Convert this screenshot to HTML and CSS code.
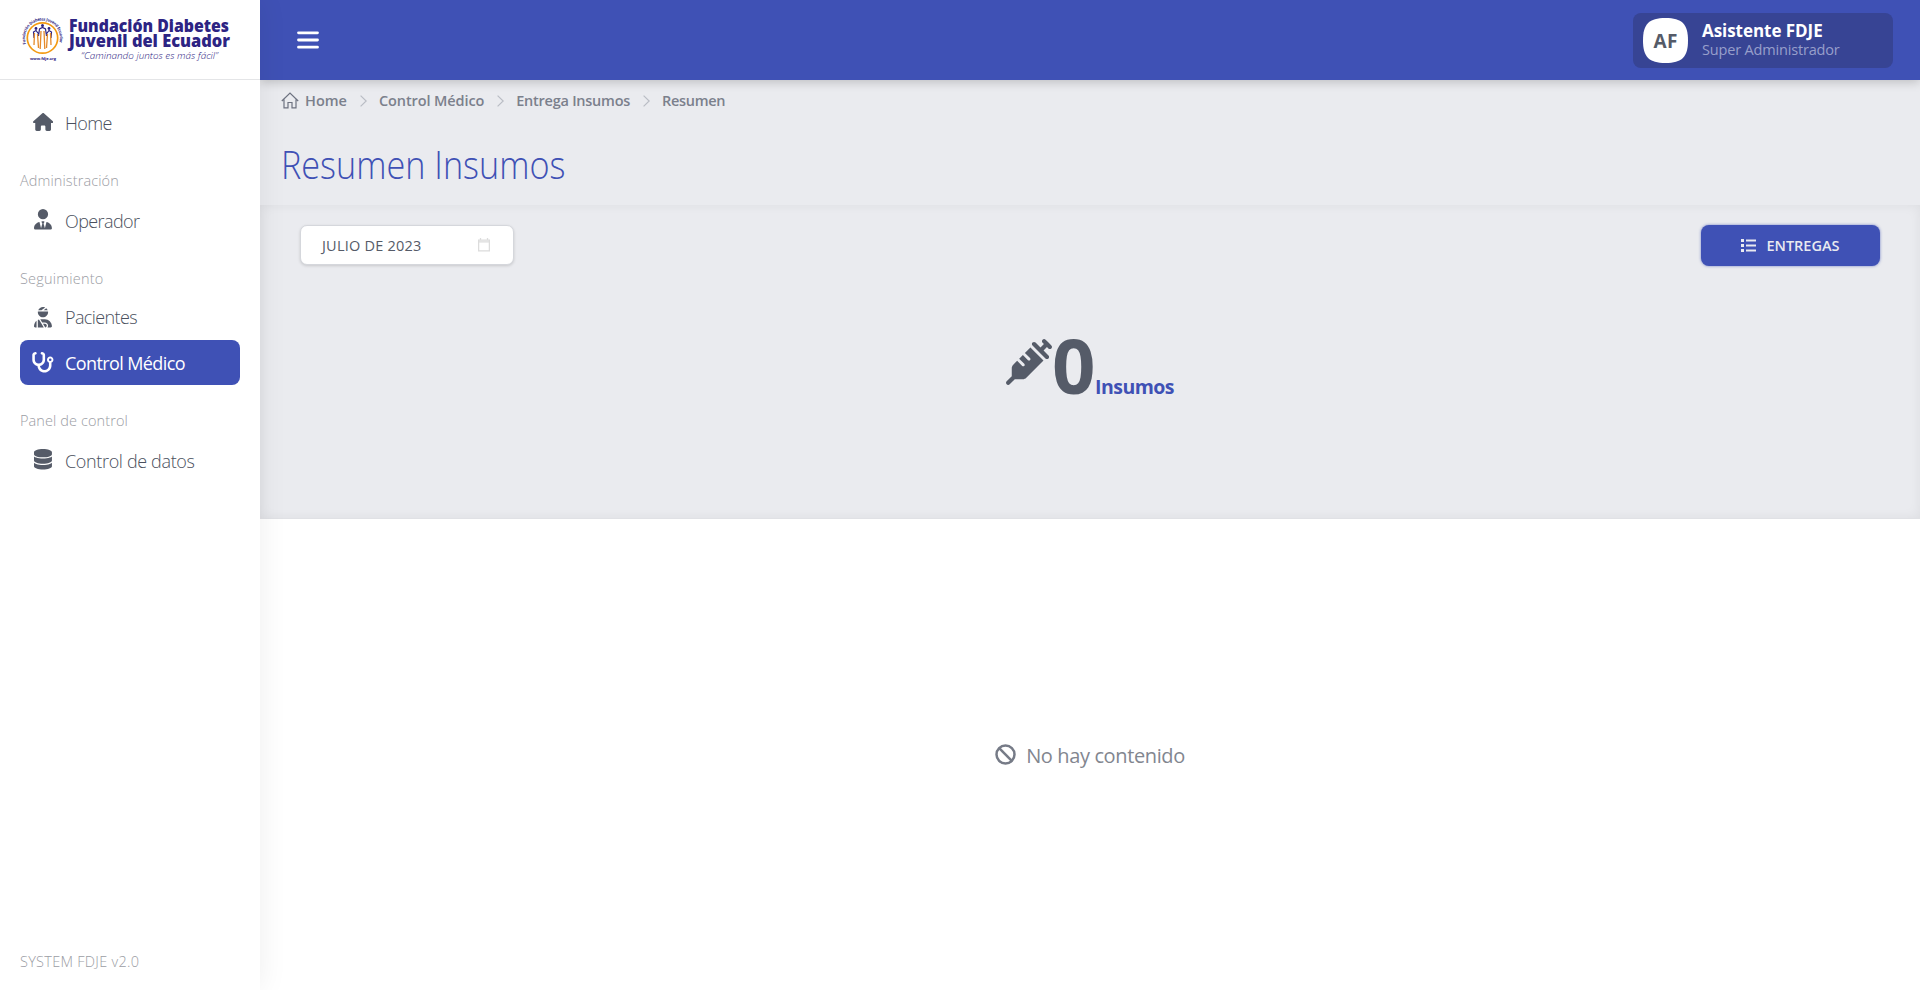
FILE: index.html
```html
<!DOCTYPE html>
<html lang="es">
<head>
<meta charset="utf-8">
<title>Resumen Insumos</title>
<link rel="stylesheet" href="styles.css">
</head>
<body>
<aside class="sidebar">
  <div class="brand">
    <svg width="220" height="60" viewBox="0 0 220 60">
      <defs><path id="ring" d="M6 43.800 A17.500 17.500 0 1 1 39 43.800"/></defs>
      <circle cx="22.500" cy="38" r="15.200" fill="none" stroke="#f39a12" stroke-width="1.700"/>
      <text class="ring-text" textLength="65"><textPath href="#ring">Fundación Diabetes Juvenil Ecuador</textPath></text>
      <g fill="none" stroke="#2d2483" stroke-width="1.200">
        <path d="M14 38l-.5-6 2.500-1.500 3 4M18.500 36l1-7 3-1.500 3 1.500 1 7M26 34.500l3-4 2.500 1.500-.5 6"/>
      </g>
      <g fill="#2d2483"><circle cx="16" cy="28.500" r="1.400"/><circle cx="22.500" cy="25.500" r="1.500"/><circle cx="29" cy="28.500" r="1.400"/></g>
      <g fill="none" stroke="#e58a2a" stroke-width="1.300"><path d="M14.500 33l-.5 12M17.500 34l1 14M21 31l-.8 18M24 31l.8 18M27.500 34l-1 14M30.500 33l.5 12"/></g>
      <text class="site" x="10" y="59.500" textLength="26">www.fdje.org</text>
      <text class="name" x="49" y="31.500" textLength="160" lengthAdjust="spacingAndGlyphs">Fundación Diabetes</text>
      <text class="name" x="49" y="47" textLength="161" lengthAdjust="spacingAndGlyphs">Juvenil del Ecuador</text>
      <text class="motto" x="61" y="58.500" textLength="137" lengthAdjust="spacingAndGlyphs">“Caminando juntos es más fácil”</text>
    </svg>
  </div>
  <nav class="nav">
    <a class="item home"><span class="ico"><svg height="18" viewBox="0 0 576 512"><path d="M575.8 255.5c0 18-15 32.1-32 32.1h-32l.7 160.2c0 2.700-.2 5.400-.5 8.100V472c0 22.100-17.900 40-40 40H392c-22.100 0-40-17.900-40-40V384c0-17.700-14.300-32-32-32H256c-17.700 0-32 14.300-32 32v88c0 22.100-17.900 40-40 40H104c-22.100 0-40-17.900-40-40V287.6H32c-18 0-32-14-32-32.1c0-9 3-17 10-24L266.4 8c7-7 15-8 22-8s15 2 21 7L564.8 231.5c8 7 12 15 11 24z"/></svg></span><span class="label">Home</span></a>
    <h6 class="group g1">Administración</h6>
    <a class="item"><span class="ico up"><svg height="20.500" viewBox="0 0 448 512"><path d="M224 256A128 128 0 1 0 224 0a128 128 0 1 0 0 256zM209.1 359.2l-18.600-31c-6.400-10.700 1.300-24.200 13.700-24.200h39.500c12.400 0 20.100 13.600 13.700 24.200l-18.600 31 33.400 123.900 39.500-161.200c77.200 12 136.300 78.800 136.300 159.400c0 17-13.800 30.700-30.700 30.700H30.700C13.800 512 0 498.2 0 481.3c0-80.600 59.100-147.400 136.3-159.4l39.500 161.2 33.400-123.9z"/></svg></span><span class="label">Operador</span></a>
    <h6 class="group g2">Seguimiento</h6>
    <a class="item pac"><span class="ico"><svg height="20.500" viewBox="0 0 448 512"><path d="M240 80H342.7c-7.900-19.500-20.400-36.500-36.200-49.900L240 80zm37.700-68.200C261.3 4.200 243.2 0 224 0c-53.700 0-99.700 33.100-118.700 80h81.400l91-68.200zM224 256c70.700 0 128-57.300 128-128c0-5.400-.3-10.800-1-16H97c-.7 5.200-1 10.600-1 16c0 70.700 57.300 128 128 128zM124 312.4c-9.700 3.100-19.100 7-28 11.700V512H243.7L181.5 408.2 124 312.4zm33-7.200L204.3 384H272c44.200 0 80 35.800 80 80c0 18-6 34.600-16 48h82.300c16.400 0 29.700-13.300 29.700-29.700C448 383.8 368.2 304 269.7 304H178.3c-7.200 0-14.300 .4-21.300 1.300zM0 482.3C0 498.7 13.300 512 29.700 512H64V345.4C24.900 378.1 0 427.3 0 482.3zM320 464c0-26.500-21.500-48-48-48H223.5l57.100 95.2C303 507.2 320 487.6 320 464z"/></svg></span><span class="label">Pacientes</span></a>
    <a class="item active"><span class="ico"><svg height="20.500" viewBox="0 0 576 512"><path d="M142.4 21.900c5.600 16.800-3.500 34.900-20.200 40.500L96 71.100V192c0 53 43 96 96 96s96-43 96-96V71.100l-26.100-8.700c-16.800-5.600-25.800-23.700-20.200-40.500s23.700-25.800 40.500-20.200l26.100 8.700C334.4 19.100 352 43.500 352 71.100V192c0 77.200-54.600 141.6-127.3 156.7C231 404.6 278.4 448 336 448c61.900 0 112-50.100 112-112V265.3c-28.300-12.300-48-40.500-48-73.3c0-44.200 35.800-80 80-80s80 35.800 80 80c0 32.800-19.700 61-48 73.300V336c0 97.200-78.800 176-176 176c-92.900 0-168.900-71.900-175.5-163.1C87.200 334.2 32 269.6 32 192V71.100c0-27.500 17.600-52 43.800-60.700l26.100-8.700c16.800-5.600 34.900 3.500 40.500 20.200zM480 224a32 32 0 1 0 0-64 32 32 0 1 0 0 64z"/></svg></span><span class="label">Control Médico</span></a>
    <h6 class="group g3">Panel de control</h6>
    <a class="item data"><span class="ico up"><svg height="20.500" viewBox="0 0 448 512"><path d="M448 80v48c0 44.200-100.3 80-224 80S0 172.2 0 128V80C0 35.800 100.3 0 224 0S448 35.800 448 80zM393.2 214.7c20.800-7.400 39.900-16.900 54.800-28.600V288c0 44.200-100.3 80-224 80S0 332.2 0 288V186.1c14.900 11.800 34 21.200 54.800 28.600C99.700 230.7 159.5 240 224 240s124.3-9.300 169.2-25.300zM0 346.1c14.900 11.800 34 21.200 54.800 28.600C99.700 390.7 159.5 400 224 400s124.3-9.300 169.2-25.300c20.800-7.400 39.900-16.900 54.800-28.600V432c0 44.200-100.3 80-224 80S0 476.2 0 432V346.1z"/></svg></span><span class="label">Control de datos</span></a>
  </nav>
  <footer class="version">SYSTEM FDJE v2.0</footer>
</aside>
<div class="page">
  <header class="topbar">
    <svg class="burger" width="22" height="18" viewBox="0 0 22 18"><path d="M1.500 1.800h19M1.500 9h19M1.500 16.200h19" stroke="#fff" stroke-width="2.800" stroke-linecap="round"/></svg>
    <div class="user">
      <svg class="avatar" width="45" height="45" viewBox="0 0 45 45"><path d="M22.500 0C39 0 45 6 45 22.500S39 45 22.500 45 0 39 0 22.500 6 0 22.500 0z" fill="#fff"/><text x="22.500" y="29.500" text-anchor="middle" textLength="24">AF</text></svg>
      <div class="who"><b>Asistente FDJE</b><span>Super Administrador</span></div>
    </div>
  </header>
  <section class="heading">
    <div class="crumbs">
      <svg width="18" height="17" viewBox="0 0 18 17" fill="none" stroke="#6d7280" stroke-width="1.200"><path d="M.8 9L9 1l8.200 8M3 7.500V15.800h4V10.500h4v5.300h4V7.500"/></svg>
      <span class="c1">Home</span>
      <svg class="sep" width="7" height="12" viewBox="0 0 7 12"><path d="M.6.6L6.200 6 .6 11.400"/></svg>
      <span class="c2">Control Médico</span>
      <svg class="sep" width="7" height="12" viewBox="0 0 7 12"><path d="M.6.6L6.200 6 .6 11.400"/></svg>
      <span class="c3">Entrega Insumos</span>
      <svg class="sep" width="7" height="12" viewBox="0 0 7 12"><path d="M.6.6L6.200 6 .6 11.400"/></svg>
      <span class="c4">Resumen</span>
    </div>
    <h1>Resumen Insumos</h1>
  </section>
  <section class="summary">
    <div class="tools">
      <div class="month"><span>JULIO DE 2023</span><svg width="12" height="14" viewBox="0 0 12 14"><path d="M.6 2.200h10.800v10.700H.6zM.6 3.800h10.800M2.500 0v2M9.500 0v2" fill="none" stroke="#dcdcdc" stroke-width="1.300"/></svg></div>
      <button class="btn"><svg width="15" height="13" viewBox="0 0 15 13" fill="#e9eaf0"><path d="M0 0h3v3H0zM0 5h3v3H0zM0 10h3v3H0zM5 .5h10v2H5zM5 5.500h10v2H5zM5 10.500h10v2H5z"/></svg><span>ENTREGAS</span></button>
    </div>
    <div class="count">
      <svg width="46" height="46" viewBox="0 0 512 512" fill="#555b68"><path d="M441 7l32 32 32 32c9.400 9.400 9.400 24.600 0 33.900s-24.600 9.400-33.900 0l-15-15L417.9 128l55 55c9.400 9.400 9.400 24.600 0 33.900s-24.600 9.400-33.900 0l-72-72L295 73c-9.400-9.400-9.400-24.600 0-33.900s24.600-9.400 33.900 0l55 55L422.1 56 407 41c-9.400-9.400-9.400-24.600 0-33.900s24.600-9.400 33.900 0zM210.3 155.7l61.100-61.100c.3 .3 .6 .7 1 1l16 16 56 56 56 56 16 16c.3 .3 .6 .6 1 1l-191 191c-10.500 10.500-24.700 16.400-39.600 16.400H97.900L41 505c-9.400 9.400-24.600 9.400-33.900 0s-9.400-24.600 0-33.900l57-57V325.3c0-14.900 5.900-29.100 16.400-39.600l43.300-43.300 57 57c6.200 6.200 16.400 6.200 22.600 0s6.200-16.400 0-22.600l-57-57 41.400-41.400 57 57c6.200 6.200 16.400 6.200 22.600 0s6.200-16.400 0-22.600l-57-57z"/></svg>
      <b class="num">0</b><b class="unit">Insumos</b>
    </div>
  </section>
  <section class="empty">
    <svg width="21" height="21" viewBox="0 0 21 21" fill="none" stroke="#767b87" stroke-width="2.500"><circle cx="10.500" cy="10.500" r="9"/><path d="M4.200 4.200l12.600 12.600"/></svg>
    <span>No hay contenido</span>
  </section>
</div>
</body>
</html>
```
FILE: styles.css
```css
* { box-sizing: border-box; }
body { margin: 0; height: 990px; display: flex; overflow: hidden; background: #fff; font-family: "Open Sans", "Noto Sans", sans-serif; color: #555b68; }
svg { flex: none; display: block; }
span, b, h1, h6 { white-space: nowrap; }

.sidebar { width: 260px; flex: none; display: flex; flex-direction: column; background: #fff; position: relative; z-index: 2; box-shadow: 0 0 28px rgba(0, 0, 0, .07); }
.brand { height: 80px; border-bottom: 1px solid #e4e5e7; padding-left: 20px; }
.brand svg { overflow: visible; }
.ring-text { font: bold 4px "Open Sans", sans-serif; fill: #2d2483; }
.site { font: bold 4px "Open Sans", sans-serif; fill: #2d2483; }
.name { font: 800 17px "Open Sans", sans-serif; fill: #2d2483; }
.motto { font: italic 300 9px "Open Sans", sans-serif; fill: #2d2483; }
.nav { flex: 1; display: flex; flex-direction: column; padding: 21px 20px 0; }
.item { height: 45px; display: flex; align-items: center; padding-left: 10px; border-radius: 8px; font-size: 18px; font-weight: 300; line-height: 24px; letter-spacing: -.6px; color: #4a505d; }
.item .label { padding-bottom: 2px; }
.item .ico { width: 26px; margin-right: 9px; display: flex; justify-content: center; fill: #555b68; }
.item .up { padding-bottom: 4px; }
.home .ico { padding-bottom: 4px; }
.item.data { letter-spacing: -.35px; }
.item.active { background: #3f51b5; color: #fff; font-weight: 400; }
.item.active .label { padding-bottom: 0; }
.active .ico { fill: #fff; }
.group { margin: 25px 0 8px; height: 20px; font-size: 14.500px; line-height: 20px; font-weight: 300; color: #9b9da4; letter-spacing: .1px; }
.g2 { margin-bottom: 6px; letter-spacing: .2px; }
.g3 { margin-top: 26px; }
.version { height: 58px; line-height: 60px; padding-left: 20px; font-size: 14.500px; font-weight: 300; color: #9b9da4; letter-spacing: .27px; }

.page { flex: 1; display: flex; flex-direction: column; }
.topbar { height: 80px; flex: none; background: #3f51b5; display: flex; align-items: center; justify-content: space-between; padding: 0 27px 0 37px; position: relative; z-index: 1; box-shadow: 0 2px 10px rgba(0, 0, 0, .2); }
.user { width: 260px; height: 55px; border-radius: 8px; background: #374494; display: flex; align-items: center; padding-left: 10px; gap: 14px; }
.avatar text { font: 700 19px "Open Sans", sans-serif; fill: #555b68; }
.who { display: flex; flex-direction: column; color: #fff; }
.who b { font-size: 17px; line-height: 20px; letter-spacing: -.05px; }
.who span { font-size: 14.500px; line-height: 18px; color: #979fcb; letter-spacing: -.17px; }

.heading { height: 125px; flex: none; background: #eaebef; padding: 10px 21px 0; }
.crumbs { height: 21px; display: flex; align-items: center; font-size: 14.500px; font-weight: 600; line-height: 21px; color: #7b808c; }
.sep { margin: 0 12px 0 13px; fill: none; stroke: #b9bcc4; stroke-width: 1.200; }
.c1 { margin-left: 6px; }
.c2 { letter-spacing: -.1px; }
.c3 { letter-spacing: -.25px; }
.c4 { letter-spacing: -.3px; }
h1 { margin: 28px 0 0; font-size: 38px; line-height: 50px; font-weight: 300; color: #3f51b5; transform: scaleX(.9); transform-origin: left; }

.summary { height: 314px; flex: none; background: #eaebef; box-shadow: inset 0 0 12px rgba(0, 0, 0, .06); padding: 20px 40px 0; border-bottom: 1px solid #e0e1e5; }
.tools { display: flex; justify-content: space-between; align-items: flex-start; }
.month { width: 214px; height: 40px; background: #fff; border: 1px solid #d5d7dc; border-radius: 7px; box-shadow: 0 1px 3px rgba(0, 0, 0, .15); display: flex; align-items: center; justify-content: space-between; padding: 0 23px 0 21px; font-size: 14.500px; font-weight: 400; letter-spacing: .22px; }
.btn { width: 179px; height: 41px; border: 0; border-radius: 8px; background: #3f51b5; box-shadow: 0 0 3px rgba(63, 81, 181, .7); display: flex; align-items: center; justify-content: center; gap: 10px; font: 600 14.500px "Open Sans", sans-serif; color: #e9eaf0; padding: 0; }
.count { display: flex; justify-content: center; height: 100px; margin-top: 58px; }
.count svg { margin-top: 15px; }
.num { font-size: 76px; line-height: 100px; width: 43px; margin-top: -9px; }
.unit { font-size: 19.500px; line-height: 28px; margin-top: 49px; color: #3f51b5; letter-spacing: -.55px; }
.empty { flex: 1; display: flex; align-items: center; justify-content: center; gap: 10px; font-size: 20px; letter-spacing: -.38px; color: #82868f; }
.empty span { padding-top: 2px; }
```
